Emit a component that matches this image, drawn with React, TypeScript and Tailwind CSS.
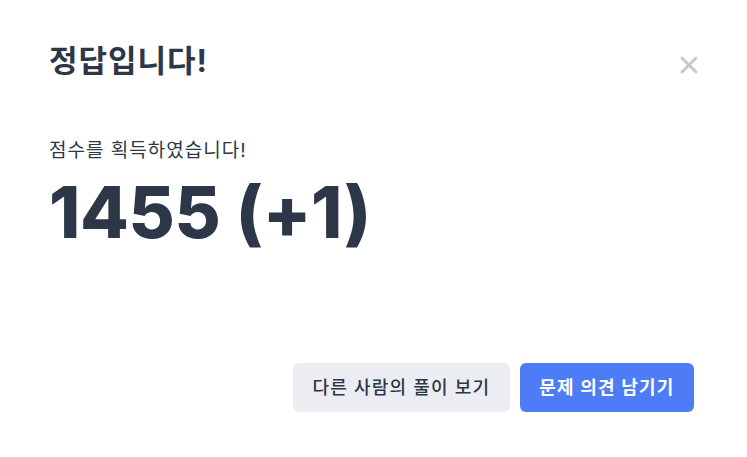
import { X } from "lucide-react";

export default function App() {
  return (
    <main
      className="relative h-[457px] w-[747px] bg-white text-[#2d3748]"
      style={{ fontFamily: 'Inter, "Noto Sans CJK KR", sans-serif' }}
    >
      <button className="absolute right-[44px] top-[51px] flex h-7 w-7 items-center justify-center text-[#c8cacf]">
        <X className="h-7 w-7" strokeWidth={2.6} />
      </button>

      <div className="flex h-full flex-col px-[49px] pt-[42px] pb-[45px]">
        <h1 className="text-[31px] font-bold leading-[38px] tracking-[1px]">정답입니다!</h1>

        <p className="mt-[58px] text-[19px] leading-[26px] tracking-[1px]">점수를 획득하였습니다!</p>
        <p className="mt-[6px] text-[71px] font-extrabold leading-[84px] tracking-[-0.3px]">
          1455 (+1)
        </p>

        <div className="mt-auto flex justify-end gap-[10px] pr-[4px]">
          <button className="h-[49px] rounded-md bg-[#ebedf2] px-[19.5px] text-[18px] font-medium tracking-[1.2px] text-[#2d3748]">
            다른 사람의 풀이 보기
          </button>
          <button className="h-[49px] rounded-md bg-[#4e7cf6] px-[19.5px] text-[18px] font-bold tracking-[1.2px] text-white">
            문제 의견 남기기
          </button>
        </div>
      </div>
    </main>
  );
}
